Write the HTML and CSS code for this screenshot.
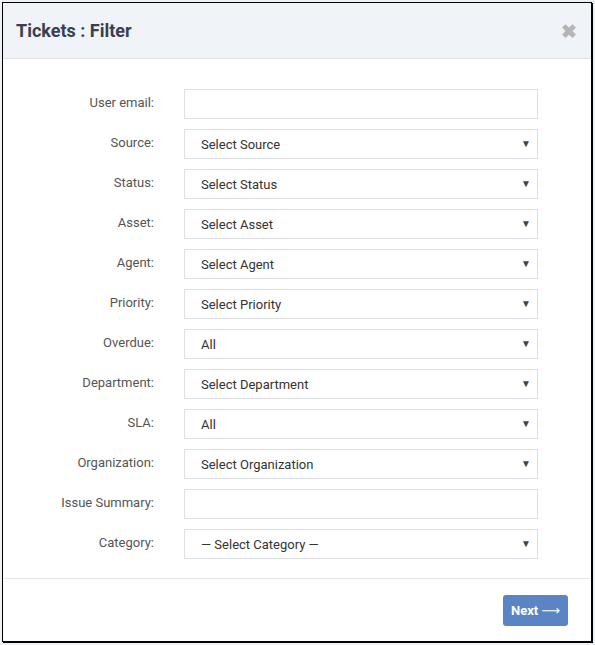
FILE: index.html
```html
<!DOCTYPE html>
<html>
<head>
    <link rel="stylesheet" href="styles.css">
    <title>Tickets : Filter</title>
</head>
<body>
    <div class="dialog">
        <div class="dialog-header">
            <h1>Tickets : Filter</h1>
            <span class="close">&#10006;</span>
        </div>
        <div class="dialog-body">
            <div class="row">
                <label>User email:</label>
                <div class="field"></div>
            </div>
            <div class="row">
                <label>Source:</label>
                <div class="field select">Select Source</div>
            </div>
            <div class="row">
                <label>Status:</label>
                <div class="field select">Select Status</div>
            </div>
            <div class="row">
                <label>Asset:</label>
                <div class="field select">Select Asset</div>
            </div>
            <div class="row">
                <label>Agent:</label>
                <div class="field select">Select Agent</div>
            </div>
            <div class="row">
                <label>Priority:</label>
                <div class="field select">Select Priority</div>
            </div>
            <div class="row">
                <label>Overdue:</label>
                <div class="field select">All</div>
            </div>
            <div class="row">
                <label>Department:</label>
                <div class="field select">Select Department</div>
            </div>
            <div class="row">
                <label>SLA:</label>
                <div class="field select">All</div>
            </div>
            <div class="row">
                <label>Organization:</label>
                <div class="field select">Select Organization</div>
            </div>
            <div class="row">
                <label>Issue Summary:</label>
                <div class="field"></div>
            </div>
            <div class="row">
                <label>Category:</label>
                <div class="field select">&mdash; Select Category &mdash;</div>
            </div>
        </div>
        <div class="dialog-footer">
            <button class="btn-next">Next <span class="arrow">&#10230;</span></button>
        </div>
    </div>
</body>
</html>
```

FILE: styles.css
```css
body {
    margin: 0;
    padding: 2px;
    background-color: #eef2f6;
    font-family: Roboto, "Liberation Sans", sans-serif;
}
.dialog {
    width: 588px;
    height: 638px;
    background-color: white;
    border: 1px solid black;
    box-shadow: 1px 1px 0 black;
    display: flex;
    flex-direction: column;
}
.dialog-header {
    height: 55px;
    background-color: #f0f4f8;
    border-bottom: 1px solid #dfe3e8;
    display: flex;
    align-items: center;
    justify-content: space-between;
    padding: 0 14px 0 13px;
}
.dialog-header h1 {
    margin: 0;
    font-size: 18px;
    font-weight: bold;
    color: #3a3f52;
}
.close {
    color: #b5b5b5;
    font-size: 19px;
    font-weight: bold;
    margin-top: 2px;
}
.dialog-body {
    flex: 1;
    padding-top: 30px;
    display: flex;
    flex-direction: column;
    gap: 10px;
    border-bottom: 1px solid #e8e8e8;
}
.row {
    display: flex;
    align-items: center;
    height: 30px;
}
.row label {
    width: 151px;
    text-align: right;
    font-size: 13px;
    color: #555;
    margin-right: 30px;
    margin-top: -4px;
}
.field {
    height: 28px;
    border: 1px solid #dde1e6;
    font-size: 13px;
    color: #333;
    line-height: 30px;
    padding-left: 16px;
    width: 336px;
    position: relative;
}
.select::after {
    content: "\25BC";
    position: absolute;
    right: 6px;
    top: -1px;
    font-size: 10px;
    color: #444;
}
.dialog-footer {
    height: 62px;
    display: flex;
    align-items: center;
    justify-content: flex-end;
    padding-right: 23px;
}
.btn-next {
    background-color: #5b84c4;
    color: white;
    border: none;
    border-radius: 3px;
    width: 65px;
    height: 31px;
    font-family: Roboto, "Liberation Sans", sans-serif;
    font-size: 13px;
    font-weight: bold;
    margin-top: 1px;
    padding: 0;
}
.arrow {
    font-family: "DejaVu Sans", sans-serif;
    font-weight: normal;
    font-size: 13px;
}
```
